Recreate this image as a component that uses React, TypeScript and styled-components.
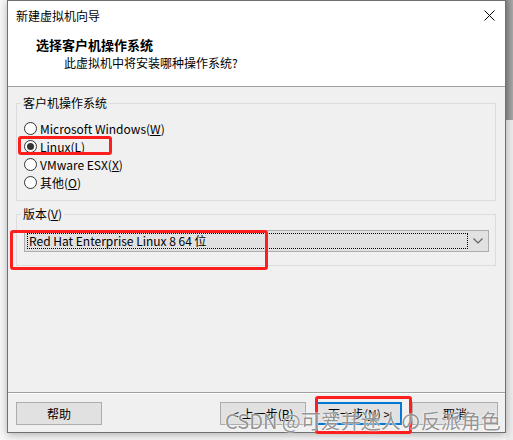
import React, {useState} from 'react';
import styled, {createGlobalStyle} from 'styled-components';

const GlobalStyle = createGlobalStyle`
  html, body {
    margin: 0;
    padding: 0;
    background: #f7f7f7;
  }
  body {
    font-family: "Noto Sans CJK SC", "Noto Sans", sans-serif;
    font-size: 12px;
    color: #000;
  }
`

const OS_LIST = [
  {label: 'Microsoft Windows', key: 'W'},
  {label: 'Linux', key: 'L'},
  {label: 'VMware ESX', key: 'X'},
  {label: '其他', key: 'O'},
]

export default function App() {
  const [os, setOs] = useState('Linux')

  return (
    <Page>
      <GlobalStyle/>
      <Dialog>
        <TitleBar>
          <Title>新建虚拟机向导</Title>
          <CloseButton>
            <svg width="11" height="11" viewBox="0 0 11 11">
              <path d="M0.5 0.5 L10.5 10.5 M10.5 0.5 L0.5 10.5" stroke="#000" strokeWidth="1"/>
            </svg>
          </CloseButton>
        </TitleBar>

        <Header>
          <Heading>选择客户机操作系统</Heading>
          <SubHeading>此虚拟机中将安装哪种操作系统?</SubHeading>
        </Header>

        <Body>
          <Group>
            <Legend>客户机操作系统</Legend>
            {OS_LIST.map(item => (
              <RadioRow key={item.key} onClick={() => setOs(item.label)}>
                <Radio $checked={os === item.label}/>
                <span>{item.label}(<u>{item.key}</u>)</span>
              </RadioRow>
            ))}
          </Group>

          <Group $gap>
            <Legend>版本(<u>V</u>)</Legend>
            <Combo>
              <ComboFocus>Red Hat Enterprise Linux 8 64 位</ComboFocus>
              <ComboArrow>
                <svg width="10" height="6" viewBox="0 0 10 6">
                  <path d="M0.5 0.5 L5 5 L9.5 0.5" stroke="#606060" strokeWidth="1.2" fill="none"/>
                </svg>
              </ComboArrow>
            </Combo>
          </Group>
        </Body>

        <Footer>
          <Button>帮助</Button>
          <Spacer/>
          <Button>&lt; 上一步(<u>B</u>)</Button>
          <Button $default>下一步(<u>N</u>) &gt;</Button>
          <Button>取消</Button>
        </Footer>

        <Mark style={{left: 10, top: 135, width: 94, height: 19}}/>
        <Mark style={{left: 2, top: 229, width: 258, height: 40}}/>
        <Mark style={{left: 307, top: 395, width: 97, height: 38}}/>
      </Dialog>
      <SideStrip>
        <SideTop/>
      </SideStrip>
      <Watermark>CSDN @可爱并迷人の反派角色</Watermark>
    </Page>
  )
}

const Page = styled.div`
  position: relative;
  display: flex;
  align-items: flex-start;
  width: 513px;
  height: 440px;
  padding-left: 7px;
  box-sizing: border-box;
  overflow: hidden;
`

const Dialog = styled.div`
  position: relative;
  display: flex;
  flex-direction: column;
  width: 499px;
  height: 433px;
  box-sizing: border-box;
  border: 1px solid #707070;
  background: #f0f0f0;
  box-shadow: 0 2px 8px rgba(0, 0, 0, 0.28);
`

const TitleBar = styled.div`
  display: flex;
  align-items: center;
  height: 29px;
  padding: 0 9px 0 8px;
  background: #fff;
`

const Title = styled.div`
  flex: 1;
  line-height: 16px;
`

const CloseButton = styled.div`
  display: flex;
  align-items: center;
  justify-content: center;
  width: 14px;
  height: 14px;
`

const Header = styled.div`
  height: 57px;
  box-sizing: border-box;
  padding-top: 6px;
  background: #fff;
  border-bottom: 1px solid #a0a0a0;
`

const Heading = styled.div`
  padding-left: 28px;
  font-size: 13px;
  font-weight: bold;
  line-height: 18px;
`

const SubHeading = styled.div`
  padding-left: 56px;
  line-height: 18px;
`

const Body = styled.div`
  flex: 1;
  display: flex;
  flex-direction: column;
  padding: 8px 9px 0 8px;
`

const Group = styled.fieldset<{ $gap?: boolean }>`
  margin: ${({$gap}) => $gap ? '5px' : '0'} 0 0 0;
  padding: 8px 6px ${({$gap}) => $gap ? '13px' : '9px'} 7px;
  border: 1px solid #dcdcdc;
  min-inline-size: 0;
`

const Legend = styled.legend`
  margin-left: -3px;
  padding: 0 2px;
  line-height: 16px;
`

const RadioRow = styled.div`
  display: flex;
  align-items: center;
  height: 18px;
  cursor: default;
`

const Radio = styled.span<{ $checked: boolean }>`
  position: relative;
  width: 13px;
  height: 13px;
  box-sizing: border-box;
  margin-right: 3px;
  border: 1px solid #333;
  border-radius: 50%;
  background: #fff;

  &::after {
    content: "";
    display: ${({$checked}) => $checked ? 'block' : 'none'};
    position: absolute;
    left: 2px;
    top: 2px;
    width: 7px;
    height: 7px;
    border-radius: 50%;
    background: #333;
  }
`

const Combo = styled.div`
  display: flex;
  align-items: center;
  height: 22px;
  box-sizing: border-box;
  padding: 2px 0 2px 2px;
  background: #e1e1e1;
  border: 1px solid #adadad;
`

const ComboFocus = styled.div`
  flex: 1;
  height: 16px;
  box-sizing: border-box;
  padding-left: 1px;
  border: 1px dotted #000;
  line-height: 14px;
  white-space: nowrap;
`

const ComboArrow = styled.div`
  display: flex;
  align-items: center;
  justify-content: center;
  width: 20px;
`

const Footer = styled.div`
  display: flex;
  align-items: flex-start;
  gap: 10px;
  height: 40px;
  box-sizing: border-box;
  padding: 9px 7px 0 8px;
  border-top: 1px solid #a0a0a0;
  box-shadow: inset 0 1px 0 #fff;
`

const Spacer = styled.div`
  flex: 1;
`

const Button = styled.div<{ $default?: boolean }>`
  display: flex;
  align-items: center;
  justify-content: center;
  width: 86px;
  height: 23px;
  box-sizing: border-box;
  background: #e1e1e1;
  border: ${({$default}) => $default ? '2px solid #0078d7' : '1px solid #adadad'};
  white-space: nowrap;
`

const Mark = styled.div`
  position: absolute;
  box-sizing: border-box;
  border: 3px solid #ff1e1e;
  border-radius: 3px;
  pointer-events: none;
`

const SideStrip = styled.div`
  flex: 1;
  align-self: stretch;
  display: flex;
  flex-direction: column;
  background: #ececec;
`

const SideTop = styled.div`
  height: 120px;
  background: linear-gradient(to right, #8c8c8c, #a8a8a8);
`

const Watermark = styled.div`
  position: absolute;
  left: 225px;
  top: 408px;
  font-size: 20px;
  line-height: 26px;
  color: rgba(120, 120, 120, 0.8);
  text-shadow: 0 0 2px #fff, 0 0 1px #fff;
  white-space: nowrap;
  pointer-events: none;
`
